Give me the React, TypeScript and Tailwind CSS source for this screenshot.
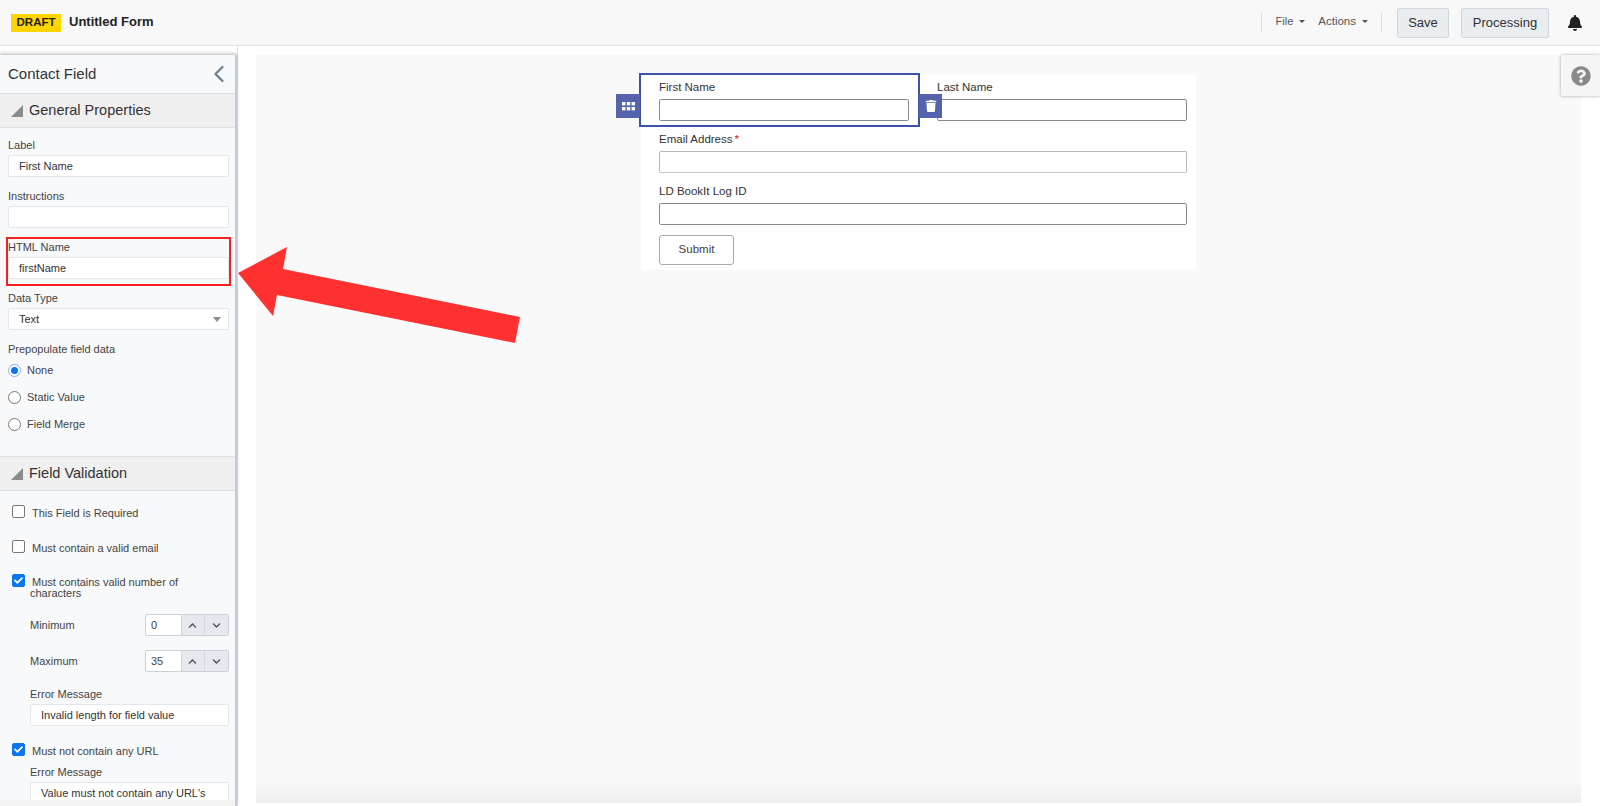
import { ChevronLeft } from 'lucide-react';
import { FaBell, FaCheck, FaChevronDown, FaChevronUp, FaQuestionCircle, FaTrash } from 'react-icons/fa';

function SectionBar({ title }: { title: string }) {
  return (
    <div className="flex h-[35px] items-center gap-[6px] border-y border-[#dfe3e8] bg-[#f0f0f0] pl-[11px] text-[14.5px] text-[#333]">
      <span className="h-0 w-0 border-b-[12px] border-l-[12px] border-b-[#8c8c8c] border-l-transparent" />
      {title}
    </div>
  );
}

function TextBox({ value, className = '' }: { value?: string; className?: string }) {
  return (
    <div className={`flex h-[22px] items-center rounded-[2px] border border-[#e4e7eb] bg-white pl-[10px] text-[11px] leading-none text-[#333] ${className}`}>
      {value}
    </div>
  );
}

function Field({ label, value }: { label: string; value?: string }) {
  return (
    <div>
      <div className="mb-[3px] text-[11px] leading-[14px] text-[#444]">{label}</div>
      <TextBox value={value} />
    </div>
  );
}

function Radio({ label, checked }: { label: string; checked?: boolean }) {
  return (
    <div className="flex h-[27px] items-center gap-[6px] text-[11px] text-[#444]">
      <span className={`flex h-[13px] w-[13px] items-center justify-center rounded-full border bg-white ${checked ? 'border-[#7fb2f5]' : 'border-[#777]'}`}>
        {checked && <span className="h-[7px] w-[7px] rounded-full bg-[#0b76f0]" />}
      </span>
      {label}
    </div>
  );
}

function Check({ checked }: { checked?: boolean }) {
  return (
    <span className={`-mt-[2px] flex h-[13px] w-[13px] shrink-0 items-center justify-center rounded-[2px] border ${checked ? 'border-[#0b76f0] bg-[#0b76f0]' : 'border-[#777] bg-white'}`}>
      {checked && <FaCheck className="text-white" size={9} />}
    </span>
  );
}

function Stepper({ label, value }: { label: string; value: string }) {
  return (
    <div className="flex h-[22px] items-center justify-between pl-[30px] pr-[6px] text-[11px] text-[#444]">
      {label}
      <div className="flex h-[22px] w-[84px] overflow-hidden rounded-[2px] border border-[#c9d1d9] bg-white">
        <div className="flex w-[35px] items-center pl-[5px] text-[#444]">{value}</div>
        <div className="flex w-[24px] items-center justify-center border-l border-[#d3d9df] bg-[#e6eaee] text-[#555]">
          <FaChevronUp size={9} />
        </div>
        <div className="flex w-[24px] items-center justify-center border-l border-[#d3d9df] bg-[#e6eaee] text-[#555]">
          <FaChevronDown size={9} />
        </div>
      </div>
    </div>
  );
}

function FormField({ label, required, dark }: { label: string; required?: boolean; dark?: boolean }) {
  return (
    <div>
      <div className="mb-[5px] text-[11.5px] leading-[14px] text-[#333]">
        {label}
        {required && <span className="ml-[2px] text-[#e02020]">*</span>}
      </div>
      <div className={`h-[22px] rounded-[2px] border bg-white ${dark ? 'border-[#8a8a8a]' : 'border-[#b8b8b8] border-b-[#c8c8c8]'}`} />
    </div>
  );
}

export default function App() {
  return (
    <div className="relative flex h-[806px] w-[1600px] flex-col overflow-hidden bg-white font-['Liberation_Sans',Arial,sans-serif]">
      <header className="flex h-[46px] shrink-0 items-center border-b border-[#dfe4ea] bg-[#f8f8f8] pl-[11px] pr-[17px]">
        <span className="flex h-[18px] w-[50px] items-center justify-center bg-[#ffd500] text-[11.5px] font-bold text-[#222]">DRAFT</span>
        <span className="mb-[1px] ml-[8px] text-[13px] font-bold text-[#222]">Untitled Form</span>
        <div className="mb-[2px] ml-auto flex h-[20px] items-center border-x border-[#d9dee3] pl-[14px] pr-[13px] text-[11px] text-[#555]">
          <span>File</span>
          <span className="ml-[6px] h-0 w-0 border-x-[3.5px] border-t-[3.5px] border-x-transparent border-t-[#555]" />
          <span className="ml-[13px] text-[11.5px]">Actions</span>
          <span className="ml-[6px] h-0 w-0 border-x-[3.5px] border-t-[3.5px] border-x-transparent border-t-[#555]" />
        </div>
        <button className="ml-[15px] h-[30px] w-[52px] rounded-[2px] border border-[#cfd8e0] bg-[#e9edf0] text-[13px] text-[#333]">Save</button>
        <button className="ml-[12px] h-[30px] w-[88px] rounded-[2px] border border-[#cfd8e0] bg-[#e9edf0] text-[13px] text-[#333]">Processing</button>
        <FaBell className="ml-[18px] text-[#222]" size={16} />
      </header>

      <div className="flex min-h-0 flex-1">
        <aside className="flex w-[238px] shrink-0 flex-col border-r border-[#dfe4ea] pt-[9px]">
          <div className="flex min-h-0 flex-1 flex-col border-r-2 border-[#c3ccd6] bg-[#f8f9fb] shadow-[0_-2px_3px_rgba(0,0,0,0.2)]">
            <div className="min-h-0 flex-1 overflow-hidden">
              <div className="flex h-[38px] items-center justify-between pl-[8px] pr-[2px] text-[15px] text-[#333]">
                Contact Field
                <ChevronLeft className="text-[#6d8193]" size={28} strokeWidth={2} />
              </div>
              <SectionBar title="General Properties" />
              <div className="flex flex-col gap-[12px] pl-[8px] pr-[6px] pt-[10px]">
                <Field label="Label" value="First Name" />
                <Field label="Instructions" />
                <div className="relative">
                  <Field label="HTML Name" value="firstName" />
                  <div className="absolute -inset-x-[2px] -bottom-[7px] -top-[3px] border-2 border-[#f52020]" />
                </div>
                <div>
                  <div className="mb-[3px] text-[11px] leading-[14px] text-[#444]">Data Type</div>
                  <div className="relative">
                    <TextBox value="Text" />
                    <span className="absolute right-[8px] top-[9px] h-0 w-0 border-x-[4px] border-t-[5px] border-x-transparent border-t-[#8c8c8c]" />
                  </div>
                </div>
                <div>
                  <div className="mb-[1px] text-[11px] leading-[14px] text-[#444]">Prepopulate field data</div>
                  <Radio label="None" checked />
                  <Radio label="Static Value" />
                  <Radio label="Field Merge" />
                </div>
              </div>
              <div className="mt-[18px]">
                <SectionBar title="Field Validation" />
              </div>
              <div className="pt-[14px] text-[11px] text-[#444]">
                <div className="flex h-[14px] items-center gap-[7px] pl-[12px]">
                  <Check />
                  <span className="pt-[3px]">This Field is Required</span>
                </div>
                <div className="mt-[21px] flex h-[14px] items-center gap-[7px] pl-[12px]">
                  <Check />
                  <span className="pt-[3px]">Must contain a valid email</span>
                </div>
                <div className="mt-[20px] flex h-[14px] items-center gap-[7px] pl-[12px]">
                  <Check checked />
                  <span className="pt-[3px]">Must contains valid number of</span>
                </div>
                <div className="pl-[30px] leading-[11px]">characters</div>
                <div className="mt-[15px]">
                  <Stepper label="Minimum" value="0" />
                </div>
                <div className="mt-[14px]">
                  <Stepper label="Maximum" value="35" />
                </div>
                <div className="mt-[15px] pl-[30px] pr-[6px]">
                  <Field label="Error Message" value="Invalid length for field value" />
                </div>
                <div className="mt-[17px] flex h-[14px] items-center gap-[7px] pl-[12px]">
                  <Check checked />
                  <span className="pt-[3px]">Must not contain any URL</span>
                </div>
                <div className="mt-[8px] pl-[30px] pr-[6px]">
                  <Field label="Error Message" value="Value must not contain any URL's" />
                </div>
              </div>
            </div>
            <div className="h-[6px] shrink-0 bg-[#f3f3f3]" />
          </div>
        </aside>

        <main className="min-w-0 flex-1 pl-[18px] pr-[19px] pt-[9px] pb-[3px]">
          <div className="h-full bg-gradient-to-b from-[#f9f9f9] from-[97%] to-[#eeeeee] pt-[19px]">
            <div className="mx-auto w-[555px] bg-white pb-[5px] pl-[18px] pr-[9px] pt-[6px]">
              <div className="grid grid-cols-2 gap-[28px]">
                <div className="relative">
                  <div className="absolute -left-[20px] -right-[11px] -top-[7px] h-[54px] border-2 border-[#3f51a8] bg-white" />
                  <div className="relative">
                    <FormField label="First Name" dark />
                  </div>
                  <div className="absolute -left-[43px] top-[14px] flex h-[24px] w-[24px] items-center justify-center bg-[#5563ac]">
                    <svg width="13" height="9" viewBox="0 0 13 9" fill="#fff">
                      <rect x="0" y="0" width="3.4" height="3.4" />
                      <rect x="4.8" y="0" width="3.4" height="3.4" />
                      <rect x="9.6" y="0" width="3.4" height="3.4" />
                      <rect x="0" y="5" width="3.4" height="3.4" />
                      <rect x="4.8" y="5" width="3.4" height="3.4" />
                      <rect x="9.6" y="5" width="3.4" height="3.4" />
                    </svg>
                  </div>
                </div>
                <div className="relative">
                  <FormField label="Last Name" dark />
                  <div className="absolute -left-[18px] top-[14px] flex h-[24px] w-[23px] items-center justify-center bg-[#5563ac]">
                    <FaTrash className="text-white" size={12} />
                  </div>
                </div>
              </div>
              <div className="mt-[11px]">
                <FormField label="Email Address" required />
              </div>
              <div className="mt-[11px]">
                <FormField label="LD BookIt Log ID" dark />
              </div>
              <button className="mt-[10px] h-[30px] w-[75px] rounded-[3px] border border-[#aaaaaa] bg-white text-[11.5px] text-[#444]">Submit</button>
            </div>
          </div>
        </main>
      </div>

      <div className="absolute right-0 top-[55px] flex h-[41px] w-[39px] items-center justify-center bg-[#f5f5f5] shadow-[0_0_3px_rgba(0,0,0,0.35)]">
        <FaQuestionCircle className="text-[#8a8a8a]" size={20} />
      </div>

      <svg className="pointer-events-none absolute left-0 top-0" width="1600" height="806">
        <polygon points="238,273 287,247 283,269 520,317 515,343 277,295 273,316" fill="#ff3030" />
      </svg>
    </div>
  );
}
